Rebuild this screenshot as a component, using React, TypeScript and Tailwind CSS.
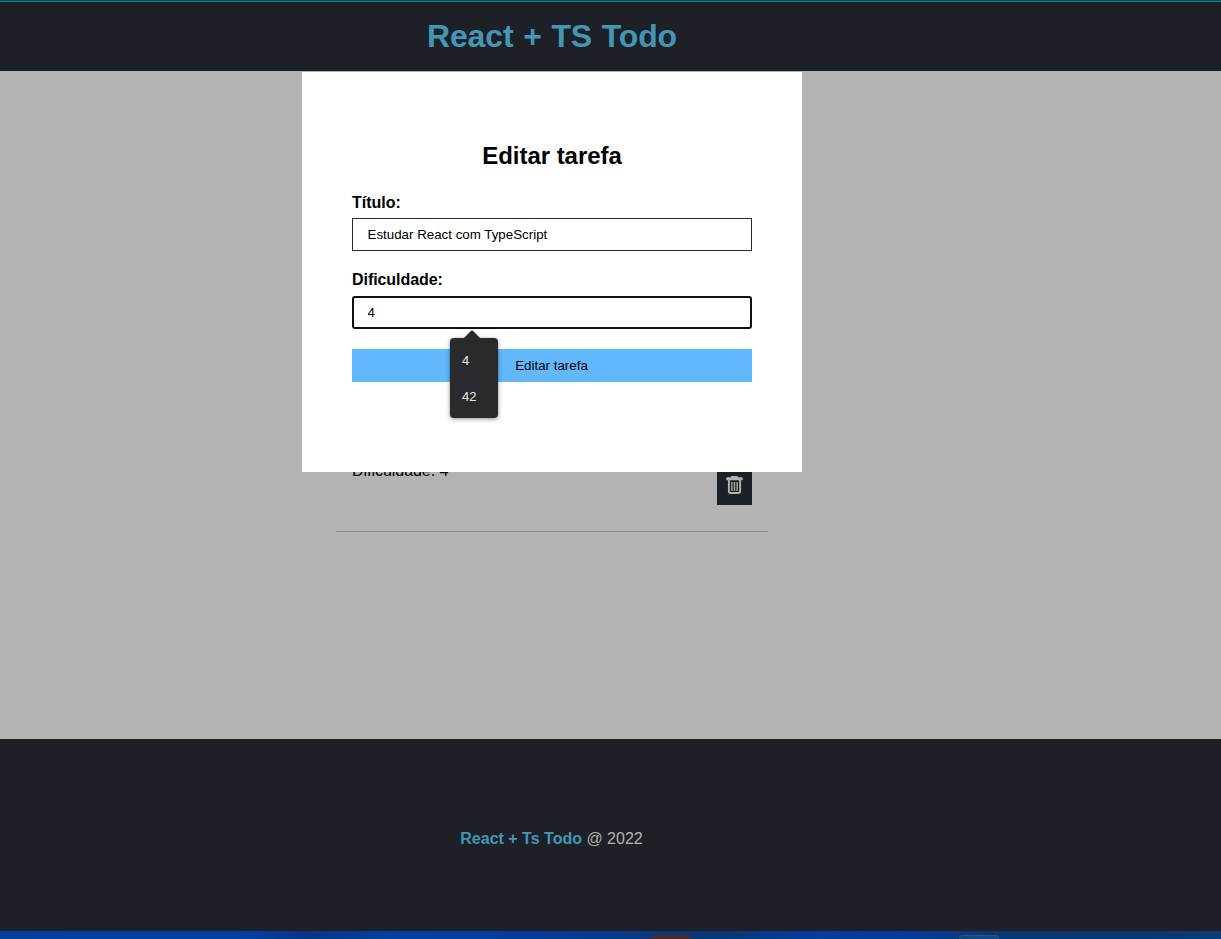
const suggestions = ["4", "42"];

function TrashIcon() {
  return (
    <svg width="17" height="18" viewBox="0 0 17 18" fill="none" stroke="currentColor">
      <path d="M5.5 0H11.5L12.2 1.2H16Q16.7 1.2 16.7 2V4.2H.3V2Q.3 1.2 1 1.2H4.8Z" fill="currentColor" stroke="none" />
      <path d="M2.9 4V15.3Q2.9 17 4.5 17H12.5Q14.1 17 14.1 15.3V4" strokeWidth="1.9" />
      <path d="M5.9 6V15M8.5 6V15M11.1 6V15" strokeWidth="1.3" />
    </svg>
  );
}

function Header() {
  return (
    <header className="flex h-[71px] flex-col bg-[#1d2027]">
      <div className="h-px bg-[#004d5c]" />
      <div className="h-px bg-[#2d7880]" />
      <h1 className="mt-[10px] w-[1104px] text-center text-[32px] leading-[48px] font-bold tracking-[-0.15px] text-[#4298b4] [word-spacing:1px]">
        React + TS Todo
      </h1>
    </header>
  );
}

function TaskRow() {
  return (
    <div className="mx-auto flex h-[109px] w-[432px] justify-between border-b border-[#8f8f8f] px-4 pt-[38px] text-black">
      <p className="text-base leading-[20px] tracking-[-0.04px]">Dificuldade: 4</p>
      <button className="mt-[9px] flex h-[35px] w-[35px] items-start justify-center bg-[#1c2027] pt-[6px] text-[#b3b3b3]">
        <TrashIcon />
      </button>
    </div>
  );
}

function Suggestions() {
  return (
    <div className="absolute top-[266px] left-[148px] h-20 w-12 rounded-[4px] bg-[#292a2d] pt-[5px] text-[13px] text-[#e8eaed] shadow-[0_1px_4px_rgba(0,0,0,0.45)]">
      <svg className="absolute -top-2 left-[13px]" width="18" height="9" viewBox="0 0 18 9">
        <path d="M0 9L8 .8Q9 0 10 .8L18 9Z" fill="#292a2d" />
      </svg>
      {suggestions.map((s) => (
        <div key={s} className="h-9 pl-3 leading-9">{s}</div>
      ))}
    </div>
  );
}

function EditModal() {
  return (
    <section className="absolute top-px left-[302px] flex h-[400px] w-[500px] flex-col bg-white px-[50px] pt-[70px] text-black">
      <h2 className="text-center text-2xl leading-[28px] font-bold tracking-[-0.04px]">Editar tarefa</h2>
      <label className="mt-[23px] text-base leading-[20px] font-bold">Título:</label>
      <input
        className="mt-[5px] h-[33px] w-full border border-[#282a35] px-[14.5px] text-[13.333px] outline-none"
        defaultValue="Estudar React com TypeScript"
      />
      <label className="mt-[19px] text-base leading-[20px] font-bold tracking-[-0.06px]">Dificuldade:</label>
      <input
        className="mt-[6px] h-[33px] w-full rounded-[3px] border-2 border-[#101010] px-[13.5px] text-[13.333px] outline-none"
        defaultValue="4"
      />
      <button className="mt-5 h-[33px] w-full bg-[#61b8fc] pr-px text-[13.333px]">Editar tarefa</button>
      <Suggestions />
    </section>
  );
}

function Taskbar() {
  return (
    <div className="flex h-[8px] items-end overflow-hidden bg-[linear-gradient(90deg,#04409c_0%,#0440a0_20%,#073582_25%,#0440a0_32%,#053c9a_43%,#083982_52%,#093775_59%,#053d9b_67%,#053c98_74%,#0a3875_81%,#0b3571_92%,#0b3b78_100%)]">
      <div className="ml-[651px] h-[4px] w-[40px] rounded-t-[4px] bg-[#4d2a2a]" />
      <div className="ml-[268px] h-[4px] w-[40px] rounded-t-[4px] border border-b-0 border-[#2c5187] bg-[#1e437c]" />
    </div>
  );
}

export default function App() {
  return (
    <div className="flex h-[939px] w-[1221px] flex-col overflow-hidden bg-[#b3b3b3] font-['Liberation_Sans',Arial,sans-serif]">
      <Header />
      <main className="relative h-[668px]">
        <div className="w-[1104px] pt-[352px]">
          <TaskRow />
        </div>
        <EditModal />
      </main>
      <footer className="h-[192px] bg-[#1d2027] pt-[90px]">
        <p className="w-[1103px] text-center text-base leading-[20px] text-[#b3b3b3]">
          <span className="font-bold text-[#4298b4]">React + Ts Todo</span> @ 2022
        </p>
      </footer>
      <Taskbar />
    </div>
  );
}
